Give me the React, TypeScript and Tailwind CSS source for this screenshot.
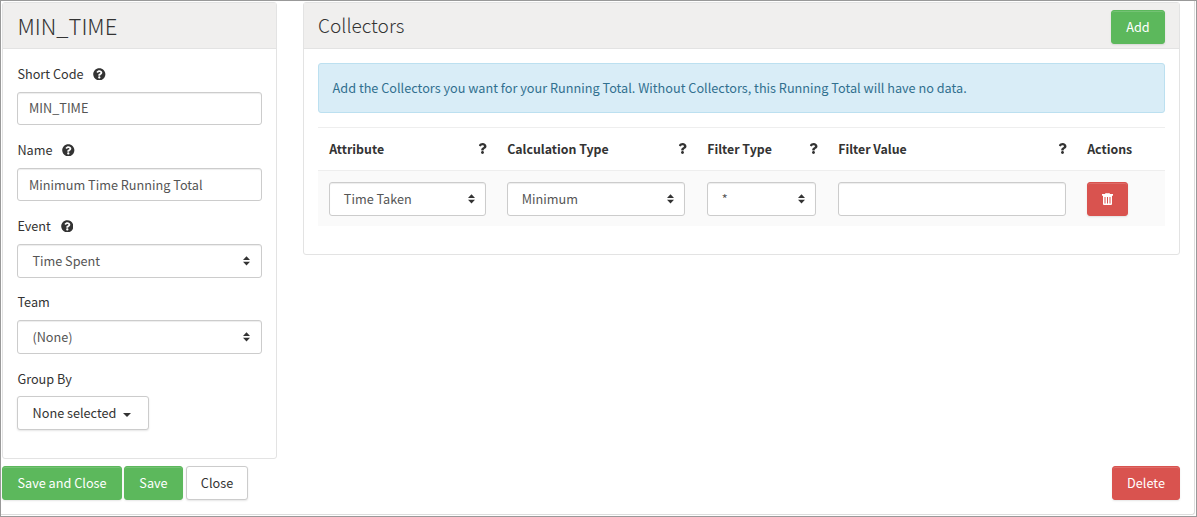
import type { ReactNode } from 'react';
import { FaQuestion, FaQuestionCircle } from 'react-icons/fa';

function SortArrows() {
  return (
    <svg width="7" height="10" viewBox="0 0 7 10" fill="#333" className="shrink-0">
      <path d="M3.5 .3 7 4H0ZM3.5 9.5 0 5.8h7Z" />
    </svg>
  );
}

function Label({ text, help }: { text: string; help?: boolean }) {
  return (
    <div className="flex h-[20px] items-center gap-[9.7px] pl-[0.4px] text-[#333]">
      <span>{text}</span>
      {help && <FaQuestionCircle className="size-[12.6px]" />}
    </div>
  );
}

const control =
  'flex items-center rounded-[3px] border border-[#ccc] bg-white text-[#555] shadow-[inset_0_1px_1px_rgba(0,0,0,0.075)]';

function TextBox({ value }: { value: string }) {
  return <div className={`${control} h-[33px] px-[11px]`}>{value}</div>;
}

function Select({ value, compact }: { value: string; compact?: boolean }) {
  return (
    <div className={`${control} h-[34px] justify-between ${compact ? 'pr-[10px] pl-[13.8px]' : 'pr-[11px] pl-[14.4px]'}`}>
      <span>{value}</span>
      <SortArrows />
    </div>
  );
}

const tones = {
  green: 'bg-[#5cb85c] border-[#5cb85c] text-white',
  red: 'bg-[#d9534f] border-[#d9534f] text-white',
  plain: 'bg-white border-[#ccc] text-[#333]',
};

function Button({ tone, width, children }: { tone: keyof typeof tones; width: string; children: ReactNode }) {
  return (
    <button
      className={`flex h-[34px] items-center justify-center rounded-[3px] border shadow-[inset_0_1px_0_rgba(255,255,255,0.15),0_1px_2px_rgba(0,0,0,0.1)] ${tones[tone]} ${width}`}
    >
      {children}
    </button>
  );
}

function Heading({ text, help }: { text: string; help?: boolean }) {
  return (
    <div className="flex items-center justify-between pr-[8.5px] pl-[11.2px] text-[12.35px] font-bold text-[#333]">
      <span>{text}</span>
      {help && <FaQuestion className="mb-[1px] size-[11px]" />}
    </div>
  );
}

const columns = 'grid grid-cols-[178px_200px_131px_249px_89px]';

export default function App() {
  return (
    <div className="h-[517px] w-[1197px] border border-[#999] bg-white font-['Noto_Sans_CJK_SC',sans-serif] text-[12.69px] leading-[20px]">
      <div className="h-[514px] w-[1194px] rounded-br-[3px] border-r border-b border-[#ddd] pt-px pl-px">
        <div className="flex h-[464px] items-start gap-[26px]">
          <section className="h-[457px] w-[275px] rounded-[3px] border border-[#e3e3e3]">
            <h2 className="flex h-[46px] items-center border-b border-[#e3e3e3] bg-[#f0efee] pb-[2px] pl-[14.5px] text-[22px] font-light text-[#333]">
              <span>MIN_TIME</span>
            </h2>
            <div className="px-[14px] pt-[15px]">
              <div className="flex h-[76px] flex-col gap-[8px]">
                <Label text="Short Code" help />
                <div className={`${control} h-[33px] px-[11px] pb-[2px]`}>MIN_TIME</div>
              </div>
              <div className="flex h-[76px] flex-col gap-[8px]">
                <Label text="Name" help />
                <TextBox value="Minimum Time Running Total" />
              </div>
              <div className="flex h-[76px] flex-col gap-[8px]">
                <Label text="Event" help />
                <Select value="Time Spent" />
              </div>
              <div className="flex h-[77px] flex-col gap-[8px]">
                <Label text="Team" />
                <Select value="(None)" />
              </div>
              <div className="flex flex-col gap-[7px]">
                <Label text="Group By" />
                <Button tone="plain" width="w-[132px]">
                  <span className="mr-[7px] -ml-[2px]">None selected</span>
                  <svg width="8" height="4" viewBox="0 0 8 4" fill="#333" className="mt-[3px]">
                    <path d="M0 0h8L4 4Z" />
                  </svg>
                </Button>
              </div>
            </div>
          </section>

          <section className="h-[253px] w-[877px] rounded-[3px] border border-[#e3e3e3]">
            <div className="flex h-[46px] items-center justify-between border-b border-[#e3e3e3] bg-[#f0efee] pt-[2px] pr-[14px] pl-[14px]">
              <h2 className="pb-[4px] text-[19.1px] font-light text-[#333]">Collectors</h2>
              <Button tone="green" width="w-[54px]">Add</Button>
            </div>
            <div className="px-[14px] pt-[14px]">
              <div className="flex h-[50px] items-center rounded-[3px] border border-[#bce0f0] bg-[#d9edf7] pl-[13.6px] text-[#31708f]">
                Add the Collectors you want for your Running Total. Without Collectors, this Running Total will have no data.
              </div>
              <div className={`${columns} mt-[14px] h-[44px] items-center border-t border-b border-[#eee]`}>
                <Heading text="Attribute" help />
                <Heading text="Calculation Type" help />
                <Heading text="Filter Type" help />
                <Heading text="Filter Value" help />
                <Heading text="Actions" />
              </div>
              <div className={`${columns} h-[55px] bg-[#fafafa] pt-[11px]`}>
                <div className="pr-[10px] pl-[11px]"><Select value="Time Taken" compact /></div>
                <div className="px-[11px]"><Select value="Minimum" compact /></div>
                <div className="px-[11px]"><Select value="*" compact /></div>
                <div className="pr-[10px] pl-[11px]"><div className={`${control} h-[34px]`} /></div>
                <div className="px-[11px]">
                  <Button tone="red" width="w-[41px]">
                    <svg width="11" height="12" viewBox="0 0 11 12" fill="white" className="mr-[1px]">
                      <path fillRule="evenodd" d="M3.2 1V.8q0-.8.8-.8h3q.8 0 .8.8V1H11v1.8H0V1ZM4.2 1h2.6V.8H4.2ZM1 2.8h9V11q0 1-1 1H2q-1 0-1-1ZM2.5 4v6.5h1V4ZM5 4v6.5h1V4ZM7.5 4v6.5h1V4Z" />
                    </svg>
                  </Button>
                </div>
              </div>
            </div>
          </section>
        </div>
        <footer className="flex w-[1178px] justify-between">
          <div className="flex">
            <Button tone="green" width="w-[120px]">Save and Close</Button>
            <div className="mr-[3px] ml-[2px]"><Button tone="green" width="w-[59px]">Save</Button></div>
            <Button tone="plain" width="w-[62px]">Close</Button>
          </div>
          <Button tone="red" width="w-[68px]">Delete</Button>
        </footer>
      </div>
    </div>
  );
}
